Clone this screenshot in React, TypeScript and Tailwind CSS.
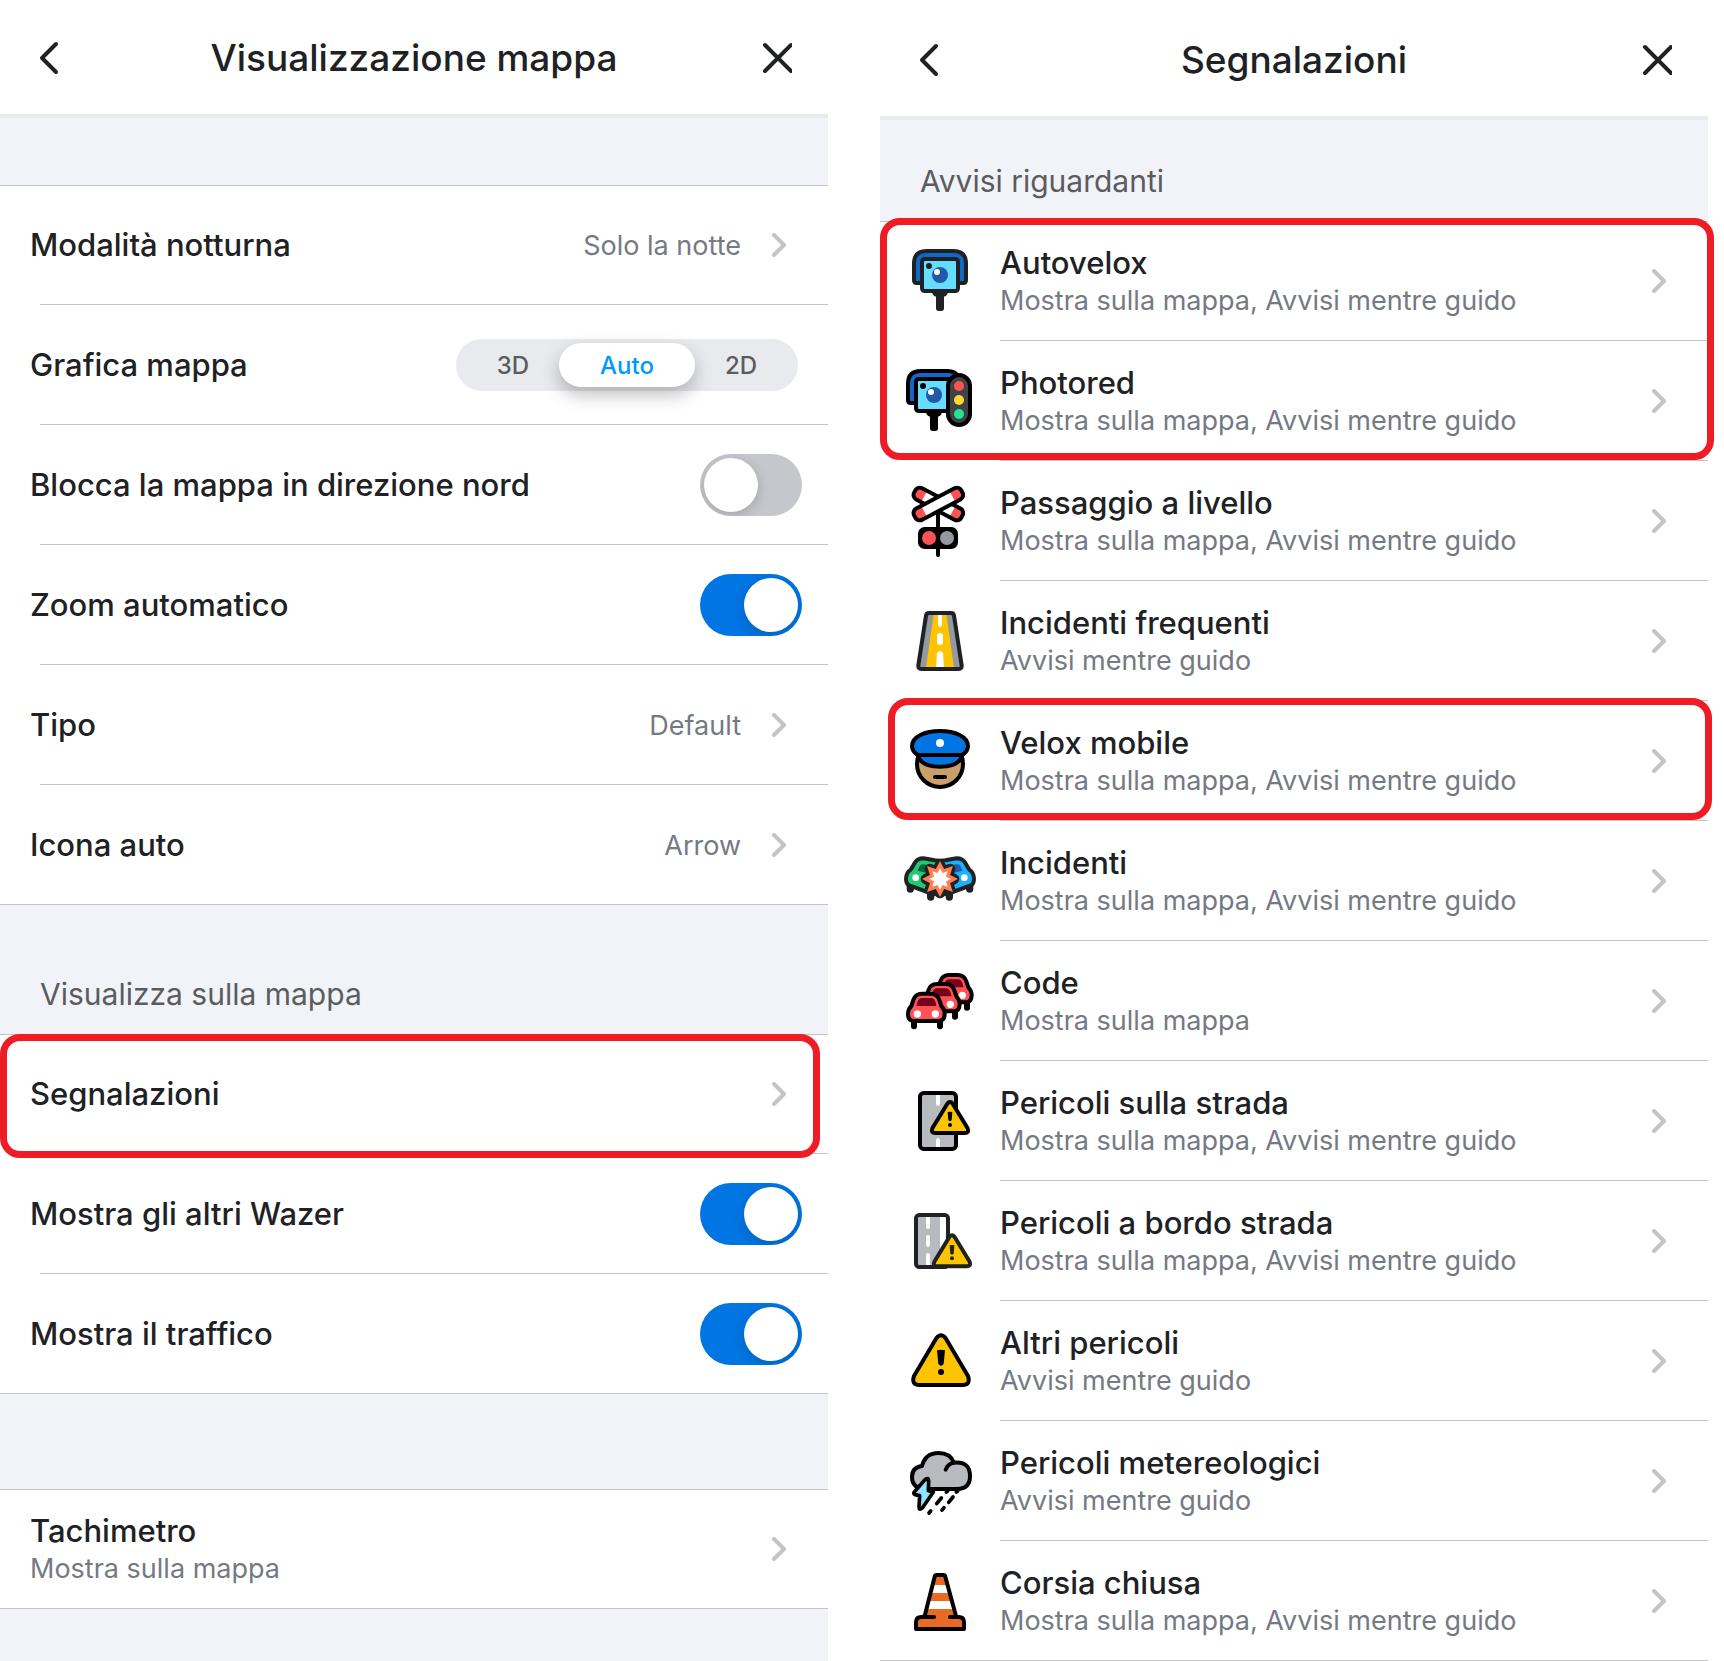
import { useState } from "react";
import type { ReactNode } from "react";

const INK = "#202124";

function Glyph({ viewBox, children }: { viewBox: string; children: ReactNode }) {
    return (
        <svg viewBox={viewBox} className="size-20" fill="none" strokeLinecap="round" strokeLinejoin="round" aria-hidden="true">
            {children}
        </svg>
    );
}

function SpeedCameraIcon() {
    return (
        <Glyph viewBox="60 78 240 240">
            <g stroke={INK} strokeWidth="12">
                <path d="M122 204h-12q-8 0-8-8v-50q0-38 38-38h80q38 0 38 38v50q0 8-8 8h-12" fill="#1268c8" />
                <rect x="126" y="132" width="108" height="96" rx="8" fill="#66dcff" />
            </g>
            <path d="M156 231h48q-2 12-12 14v35q0 8-8 8h-8q-8 0-8-8v-35q-10-2-12-14z" fill={INK} />
            <circle cx="147" cy="153" r="9" fill={INK} />
            <circle cx="180" cy="180" r="24" fill="#2259a8" />
            <circle cx="171" cy="171" r="9" fill="#fff" />
        </Glyph>
    );
}

function RedLightCameraIcon() {
    return (
        <Glyph viewBox="60 438 240 240">
            <g stroke="#000" strokeWidth="12">
                <path d="M104 564h-12q-8 0-8-8v-50q0-38 38-38h80q24 0 32 16v80z" fill="#1268c8" />
                <rect x="108" y="492" width="108" height="96" rx="8" fill="#66dcff" />
            </g>
            <path d="M138 591h48q-2 12-12 14v35q0 8-8 8h-8q-8 0-8-8v-35q-10-2-12-14z" fill="#000" />
            <circle cx="129" cy="513" r="9" fill="#000" />
            <circle cx="162" cy="540" r="24" fill="#2259a8" />
            <circle cx="153" cy="531" r="9" fill="#fff" />
            <rect x="204" y="480" width="66" height="150" rx="33" fill="#3f4246" stroke="#000" strokeWidth="12" />
            <circle cx="237" cy="513" r="15" fill="#ff5252" />
            <circle cx="237" cy="555" r="15" fill="#ffd633" />
            <circle cx="237" cy="597" r="15" fill="#20e693" />
        </Glyph>
    );
}

function CrossingBoard() {
    return (
        <>
            <rect x="-80" y="-19" width="160" height="38" rx="15" fill="#fff" />
            <path d="M-48-19h-17q-15 0-15 15v8q0 15 15 15h17zM48 19h17q15 0 15-15v-8q0-15-15-15h-17z" fill="#ff5252" />
            <rect x="-80" y="-19" width="160" height="38" rx="15" stroke="#000" strokeWidth="12" />
        </>
    );
}

function RailCrossingIcon() {
    return (
        <Glyph viewBox="60 63 240 240">
            <path d="M174 150v135" stroke="#000" strokeWidth="12" />
            <g transform="translate(175 132) rotate(28)"><CrossingBoard /></g>
            <g transform="translate(175 132) rotate(-28)"><CrossingBoard /></g>
            <rect x="114" y="201" width="120" height="66" rx="20" fill="#000" />
            <circle cx="147" cy="234" r="21" fill="#ff5252" />
            <circle cx="201" cy="234" r="21" fill="#9499a0" />
        </Glyph>
    );
}

function RoadIcon() {
    return (
        <Glyph viewBox="60 423 240 240">
            <path d="M147 459h66q8 0 9 8l23 149q1 11-9 11H124q-10 0-9-11l23-149q1-8 9-8z" fill="#9499a0" />
            <path d="M161 462h38l23 162h-84z" fill="#ffc400" />
            <path d="M174 462h12v32q-2 7-6 7t-6-7z" fill="#fff" />
            <rect x="171" y="519" width="18" height="36" rx="9" fill="#fff" />
            <path d="M168 624l3-44q9-14 18 0l3 44z" fill="#fff" />
            <path d="M147 459h66q8 0 9 8l23 149q1 11-9 11H124q-10 0-9-11l23-149q1-8 9-8z" stroke={INK} strokeWidth="12" />
        </Glyph>
    );
}

function PoliceIcon() {
    return (
        <Glyph viewBox="60 78 240 240">
            <g stroke="#000" strokeWidth="12">
                <circle cx="180" cy="207" r="69" fill="#c9a06a" />
                <path d="M113 180h134c-6 24-32 35-67 35s-61-11-67-35z" fill="#0075e3" />
                <path d="M114 180q-18-10-18-27c0-28 39-45 84-45s84 17 84 45q0 17-18 27z" fill="#0075e3" />
                <path d="M165 246h30" />
            </g>
            <circle cx="180" cy="144" r="12" fill="#fff" />
        </Glyph>
    );
}

function CrashedCar({ body, glass }: { body: string; glass: string }) {
    return (
        <>
            <path d="M91 576v6M152 596v10" stroke={INK} strokeWidth="22" />
            <path d="M180 497l-16-1-34-6q-18 0-26 14l-11 19q-15 10-15 28 0 17 12 21l60 22 30 6z" fill={body} stroke={INK} strokeWidth="12" />
            <path d="M112 527l8-15q3-5 11-4l29 6-18 20z" fill={glass} />
            <circle cx="107" cy="548" r="10" fill="#fff" />
        </>
    );
}

function CrashIcon() {
    const burst = "180,509 190,528 211,521 204,542 223,552 204,562 211,583 190,576 180,595 170,576 149,583 156,562 137,552 156,542 149,521 170,528";
    return (
        <Glyph viewBox="60 438 240 240">
            <CrashedCar body="#20c974" glass="#00683c" />
            <g transform="matrix(-1 0 0 1 360 0)"><CrashedCar body="#1eb0ff" glass="#2259a8" /></g>
            <polygon points={burst} fill={INK} stroke={INK} strokeWidth="30" />
            <polygon points={burst} fill="#fff" stroke="#ff7f50" strokeWidth="10" strokeLinejoin="miter" />
        </Glyph>
    );
}

function QueueCar() {
    return (
        <>
            <path d="M102 244v15M180 244v15" stroke="#000" strokeWidth="18" />
            <path d="M84 222q0-14 10-24l6-18q6-19 26-19h26q20 0 26 19l6 18q10 10 10 24 0 21-18 21H102q-18 0-18-21z" fill="#ff5252" stroke="#000" strokeWidth="12" />
            <path d="M110 198q2-24 16-24h28q12 0 15 24z" fill="#78001c" />
            <circle cx="112" cy="222" r="11" fill="#fff" />
            <circle cx="166" cy="222" r="11" fill="#fff" />
        </>
    );
}

function TrafficIcon() {
    return (
        <Glyph viewBox="60 63 240 240">
            <g transform="translate(81 -56)"><QueueCar /></g>
            <g transform="translate(45 -29)"><QueueCar /></g>
            <QueueCar />
        </Glyph>
    );
}

function SmallWarning({ ink }: { ink: string }) {
    return (
        <>
            <path d="M202 491q8-10 16 0l45 74q5 14-9 14h-88q-14 0-9-14z" fill="#ffc400" stroke={ink} strokeWidth="12" />
            <path d="M203 516q7-2 14 0l-2 25q-5 5-10 0z" fill={ink} />
            <circle cx="210" cy="555" r="6" fill={ink} />
        </>
    );
}

function RoadHazardIcon() {
    return (
        <Glyph viewBox="60 423 240 240">
            <rect x="120" y="459" width="108" height="168" rx="11" fill="#b7bbc0" stroke="#000" strokeWidth="12" />
            <path d="M168 465h12v28q-2 5-6 5t-6-5zM168 621h12v-22q-2-5-6-5t-6 5z" fill="#fff" />
            <SmallWarning ink="#000" />
        </Glyph>
    );
}

function RoadsideHazardIcon() {
    return (
        <Glyph viewBox="60 33 240 240">
            <rect x="108" y="75" width="96" height="156" rx="10" fill="#fff" />
            <path d="M118 78h62v150h-62q-7 0-7-8V86q0-8 7-8z" fill="#b7bbc0" />
            <path d="M138 81h12v31q-2 5-6 5t-6-5zM138 140q2-5 6-5t6 5v26q-2 5-6 5t-6-5zM138 194q2-5 6-5t6 5v31h-12z" fill="#fff" />
            <rect x="108" y="75" width="96" height="156" rx="10" stroke={INK} strokeWidth="12" />
            <g transform="translate(6 -350)"><SmallWarning ink={INK} /></g>
        </Glyph>
    );
}

function WarningIcon() {
    return (
        <Glyph viewBox="60 393 240 240">
            <path d="M169 445q14-18 28 0l67 113q9 27-17 27H119q-26 0-17-27z" fill="#ffc400" stroke="#000" strokeWidth="12" />
            <path d="M171 481q12-3 24 0l-4 41q-8 10-16 0z" fill="#000" />
            <circle cx="183" cy="546" r="9" fill="#000" />
        </Glyph>
    );
}

function StormIcon() {
    return (
        <Glyph viewBox="60 33 240 240">
            <g stroke="#000" strokeWidth="12">
                <path d="M128 177q-32-6-32-36 0-29 30-33 10-39 50-39 34 0 46 29 48-4 48 40 0 39-39 39z" fill="#b7bbc0" />
                <path d="M197 119q6-17 25-21" />
            </g>
            <path d="M133 151q13-13 13 4l-1 27 15 4-33 48q-10 9-10-4l2-33-14-3q-6-3-2-8z" fill="#8fe6ff" stroke="#000" strokeWidth="11" />
            <path d="M203 183l-4 3M184 204l-14 17M152 243l-5 6M233 183l-4 3M219 201l-13 16M192 233l-6 7" stroke="#000" strokeWidth="11" />
        </Glyph>
    );
}

function ConeIcon() {
    return (
        <Glyph viewBox="60 393 240 240">
            <path d="M168 435h24q4 0 5 4l32 122h7q16 0 16 16v20H108v-20q0-16 16-16h9l30-122q1-4 5-4z" fill="#e86a24" />
            <path d="M157 465h46l7 24h-60zM144 513h72l7 24h-86z" fill="#fff" />
            <path d="M134 558l30-118q1-5 6-5h20q5 0 6 5l32 118" stroke="#000" strokeWidth="12" />
            <path d="M162 561h-38q-16 0-16 16v20h144v-20q0-16-16-16h-26" stroke="#000" strokeWidth="12" />
        </Glyph>
    );
}

function Chevron() {
    return (
        <svg viewBox="0 0 15 24" className="w-[15px] h-6 shrink-0" fill="none" stroke="#c4c4c6" strokeWidth="4" strokeLinecap="round" strokeLinejoin="round" aria-hidden="true">
            <path d="M3 2L13 12L3 22" />
        </svg>
    );
}

function PanelHeader({ title }: { title: string }) {
    return (
        <header className="flex items-center justify-between h-[118px] px-9 pt-0.5 bg-white border-b-4 border-[#e9eaee]">
            <button type="button" aria-label="Indietro">
                <svg viewBox="0 0 30 36" className="w-[30px] h-9" fill="none" stroke={INK} strokeWidth="4" strokeLinecap="round" strokeLinejoin="round">
                    <path d="M20 4L6 18L20 32" />
                </svg>
            </button>
            <h1 className="text-[37px] leading-[48px] font-medium">{title}</h1>
            <button type="button" aria-label="Chiudi">
                <svg viewBox="0 0 30 36" className="w-[30px] h-9" fill="none" stroke={INK} strokeWidth="4" strokeLinecap="round">
                    <path d="M3 5L29 31M29 5L3 31" />
                </svg>
            </button>
        </header>
    );
}

function Switch({ id, defaultChecked = false }: { id: string; defaultChecked?: boolean }) {
    return (
        <input
            id={id}
            type="checkbox"
            role="switch"
            defaultChecked={defaultChecked}
            className="appearance-none w-[102px] h-[62px] p-1 overflow-hidden rounded-full bg-[#c6c7cc] checked:bg-[#0075e3] cursor-pointer before:content-[''] before:block before:size-[54px] before:rounded-full before:bg-white before:shadow-[0_3px_12px_rgba(0,0,0,0.18)] checked:before:translate-x-10"
        />
    );
}

function MapModePicker() {
    const [mode, setMode] = useState("Auto");

    return (
        <fieldset aria-label="Grafica mappa" className="grid grid-cols-3 items-center w-[342px] h-[52px] rounded-full bg-[#e9eaee] text-2xl font-medium text-[#5a5c60]">
            {["3D", "Auto", "2D"].map((option) => (
                <label key={option} className="flex items-center justify-center h-11 -mx-[11px] pt-0.5 rounded-[22px] cursor-pointer has-checked:bg-white has-checked:text-[#0099ff] has-checked:shadow-[0_8px_18px_rgba(0,0,0,0.25)]">
                    <input type="radio" name="map-mode" checked={mode === option} onChange={() => setMode(option)} className="appearance-none" />
                    {option}
                </label>
            ))}
        </fieldset>
    );
}

const rowClass = "relative flex items-center h-[120px] pl-[30px]";
const labelClass = "text-[31px] leading-10 font-medium";
const hintClass = "text-[27px] leading-9 text-[#757a82]";

function Divider() {
    return <span className="absolute bottom-0 left-10 right-0 h-px bg-[#c4c4c6]" />;
}

function LinkRow({ label, value, hint, last, children }: { label: string; value?: string; hint?: string; last?: boolean; children?: ReactNode }) {
    return (
        <li>
            <a href="#" className={`${rowClass} pr-[42px]`}>
                <span className="flex-1">
                    <span className={`${labelClass} block`}>{label}</span>
                    {hint && <span className={`${hintClass} block`}>{hint}</span>}
                </span>
                {value && <span className={`${hintClass} mr-[30px] pt-0.5`}>{value}</span>}
                <Chevron />
                {!last && <Divider />}
                {children}
            </a>
        </li>
    );
}

function SwitchRow({ id, label, on, last }: { id: string; label: string; on?: boolean; last?: boolean }) {
    return (
        <li className={`${rowClass} pr-[26px]`}>
            <label htmlFor={id} className={`${labelClass} flex-1`}>{label}</label>
            <Switch id={id} defaultChecked={on} />
            {!last && <Divider />}
        </li>
    );
}

// the first row slides under the top line of its group
const groupClass = "bg-white border-y border-[#c4c4c6] *:first:-mt-px *:last:-mb-px";

const alerts = [
    { name: "Autovelox", hint: "Mostra sulla mappa, Avvisi mentre guido", icon: <SpeedCameraIcon />, mark: "-top-[3px] left-0 -right-1.5 h-[242px]" },
    { name: "Photored", hint: "Mostra sulla mappa, Avvisi mentre guido", icon: <RedLightCameraIcon /> },
    { name: "Passaggio a livello", hint: "Mostra sulla mappa, Avvisi mentre guido", icon: <RailCrossingIcon /> },
    { name: "Incidenti frequenti", hint: "Avvisi mentre guido", icon: <RoadIcon /> },
    { name: "Velox mobile", hint: "Mostra sulla mappa, Avvisi mentre guido", icon: <PoliceIcon />, mark: "-top-[3px] left-2 -right-1 h-[122px]" },
    { name: "Incidenti", hint: "Mostra sulla mappa, Avvisi mentre guido", icon: <CrashIcon /> },
    { name: "Code", hint: "Mostra sulla mappa", icon: <TrafficIcon /> },
    { name: "Pericoli sulla strada", hint: "Mostra sulla mappa, Avvisi mentre guido", icon: <RoadHazardIcon /> },
    { name: "Pericoli a bordo strada", hint: "Mostra sulla mappa, Avvisi mentre guido", icon: <RoadsideHazardIcon /> },
    { name: "Altri pericoli", hint: "Avvisi mentre guido", icon: <WarningIcon /> },
    { name: "Pericoli metereologici", hint: "Avvisi mentre guido", icon: <StormIcon /> },
    { name: "Corsia chiusa", hint: "Mostra sulla mappa, Avvisi mentre guido", icon: <ConeIcon /> },
];

const markClass = "absolute z-10 border-[7px] border-[#ee1c25] rounded-[20px] pointer-events-none";

export default function App() {
    return (
        <div className="flex gap-[52px] pr-4 min-h-screen bg-white font-['Inter',sans-serif] text-[#202124]">
            <section className="flex-1 min-w-0 bg-[#f2f3f8]">
                <PanelHeader title="Visualizzazione mappa" />

                <ul className={`${groupClass} mt-[67px]`}>
                    <LinkRow label="Modalità notturna" value="Solo la notte" />
                    <li className={`${rowClass} pr-[30px]`}>
                        <span className={`${labelClass} flex-1`}>Grafica mappa</span>
                        <MapModePicker />
                        <Divider />
                    </li>
                    <SwitchRow id="lock-north" label="Blocca la mappa in direzione nord" />
                    <SwitchRow id="auto-zoom" label="Zoom automatico" on />
                    <LinkRow label="Tipo" value="Default" />
                    <LinkRow label="Icona auto" value="Arrow" last />
                </ul>

                <h2 className="flex items-end h-[129px] px-10 pb-5 text-[30px] leading-10 text-[#5a5c60]">Visualizza sulla mappa</h2>
                <ul className={groupClass}>
                    <LinkRow label="Segnalazioni">
                        <span className={`${markClass} top-0 left-0 right-2 h-[124px]`} />
                    </LinkRow>
                    <SwitchRow id="show-wazers" label="Mostra gli altri Wazer" on />
                    <SwitchRow id="show-traffic" label="Mostra il traffico" on last />
                </ul>

                <ul className={`${groupClass} mt-[95px]`}>
                    <LinkRow label="Tachimetro" hint="Mostra sulla mappa" last />
                </ul>
            </section>

            <section className="flex-1 min-w-0 pt-0.5">
                <PanelHeader title="Segnalazioni" />
                <h2 className="flex items-end h-[101px] px-10 pb-5 bg-[#f2f3f8] text-[30px] leading-10 text-[#5a5c60]">Avvisi riguardanti</h2>
                <ul className={groupClass}>
                    {alerts.map((alert) => (
                        <li key={alert.name}>
                            <a href="#" className="relative flex items-center h-[120px] pr-[42px]">
                                <span className="flex justify-center w-[120px]">{alert.icon}</span>
                                <span className="flex-1">
                                    <span className={`${labelClass} block`}>{alert.name}</span>
                                    <span className={`${hintClass} block`}>{alert.hint}</span>
                                </span>
                                <Chevron />
                                <span className="absolute bottom-0 left-[120px] right-0 h-px bg-[#c4c4c6]" />
                                {alert.mark && <span className={`${markClass} ${alert.mark}`} />}
                            </a>
                        </li>
                    ))}
                </ul>
            </section>
        </div>
    );
}
